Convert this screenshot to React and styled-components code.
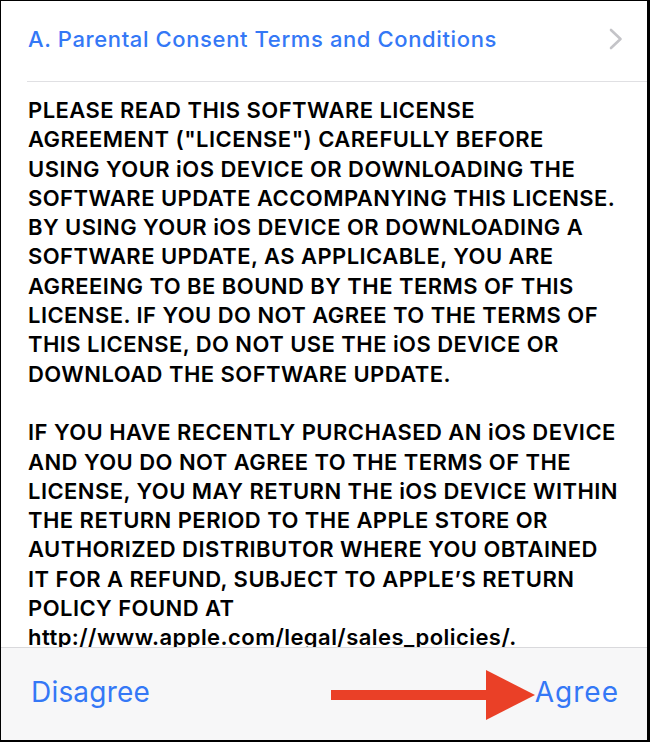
import React from "react";
import styled, { createGlobalStyle } from "styled-components";

const GlobalStyle = createGlobalStyle`
  html, body {
    margin: 0;
    padding: 0;
    background: #ffffff;
  }
  * {
    box-sizing: border-box;
  }
`;

const paragraphs = [
  [
    "PLEASE READ THIS SOFTWARE LICENSE",
    'AGREEMENT ("LICENSE") CAREFULLY BEFORE',
    "USING YOUR iOS DEVICE OR DOWNLOADING THE",
    "SOFTWARE UPDATE ACCOMPANYING THIS LICENSE.",
    "BY USING YOUR iOS DEVICE OR DOWNLOADING A",
    "SOFTWARE UPDATE, AS APPLICABLE, YOU ARE",
    "AGREEING TO BE BOUND BY THE TERMS OF THIS",
    "LICENSE. IF YOU DO NOT AGREE TO THE TERMS OF",
    "THIS LICENSE, DO NOT USE THE iOS DEVICE OR",
    "DOWNLOAD THE SOFTWARE UPDATE.",
  ],
  [
    "IF YOU HAVE RECENTLY PURCHASED AN iOS DEVICE",
    "AND YOU DO NOT AGREE TO THE TERMS OF THE",
    "LICENSE, YOU MAY RETURN THE iOS DEVICE WITHIN",
    "THE RETURN PERIOD TO THE APPLE STORE OR",
    "AUTHORIZED DISTRIBUTOR WHERE YOU OBTAINED",
    "IT FOR A REFUND, SUBJECT TO APPLE\u2019S RETURN",
    "POLICY FOUND AT",
    "http://www.apple.com/legal/sales_policies/.",
  ],
];

function App() {
  return (
    <>
      <GlobalStyle />
      <Screen>
        <Header>
          <HeaderTitle>A. Parental Consent Terms and Conditions</HeaderTitle>
          <Chevron width="14" height="22" viewBox="0 0 14 22">
            <path
              d="M2 2 L11.5 11 L2 20"
              fill="none"
              stroke="#c4c4c8"
              strokeWidth="2.6"
              strokeLinecap="round"
              strokeLinejoin="round"
            />
          </Chevron>
        </Header>
        <Body>
          {paragraphs.map((lines, i) => (
            <Paragraph key={i}>
              {lines.map((line) => (
                <Line key={line}>{line}</Line>
              ))}
            </Paragraph>
          ))}
        </Body>
        <Footer>
          <ActionButton>Disagree</ActionButton>
          <ActionButton $wide>Agree</ActionButton>
          <Arrow width="206" height="52" viewBox="0 0 206 52">
            <rect x="0" y="20" width="160" height="10" fill="#ea4027" />
            <polygon points="155,0 204,25 155,50" fill="#ea4027" />
          </Arrow>
        </Footer>
      </Screen>
    </>
  );
}

export default App;

const Screen = styled.div`
  width: 650px;
  height: 742px;
  display: flex;
  flex-direction: column;
  overflow: hidden;
  border-style: solid;
  border-color: #000;
  border-width: 1px 3px 2px 1px;
  background: #fff;
  font-family: Inter, "Noto Sans", sans-serif;
`;

const Header = styled.div`
  height: 81px;
  flex: none;
  margin-left: 26px;
  padding-right: 24px;
  display: flex;
  align-items: center;
  justify-content: space-between;
  border-bottom: 1px solid #e0e0e3;
`;

const HeaderTitle = styled.div`
  padding-left: 1px;
  color: #3478f6;
  font-size: 22px;
  font-weight: 500;
  letter-spacing: 0.62px;
  margin-top: -5px;
`;

const Chevron = styled.svg`
  display: block;
  margin-top: -4px;
`;

const Body = styled.div`
  flex: 1;
  min-height: 0;
  overflow: hidden;
  padding: 14px 0 0 27px;
`;

const Paragraph = styled.div`
  margin-bottom: 29.3px;
`;

const Line = styled.div`
  color: #000;
  font-size: 22px;
  font-weight: 600;
  line-height: 29.3px;
  letter-spacing: 0.45px;
  white-space: nowrap;
`;

const Footer = styled.div`
  position: relative;
  height: 93px;
  flex: none;
  display: flex;
  align-items: center;
  justify-content: space-between;
  padding: 0 28px 4px 30px;
  background: #f7f7f8;
  border-top: 1px solid #d9d9dc;
`;

const ActionButton = styled.button`
  border: none;
  background: none;
  padding: 0;
  color: #3478f6;
  font-family: inherit;
  font-size: 28px;
  font-weight: 400;
  letter-spacing: ${(p) => (p.$wide ? "1px" : "0.2px")};
  cursor: pointer;
`;

const Arrow = styled.svg`
  position: absolute;
  left: 330px;
  top: 22px;
`;
